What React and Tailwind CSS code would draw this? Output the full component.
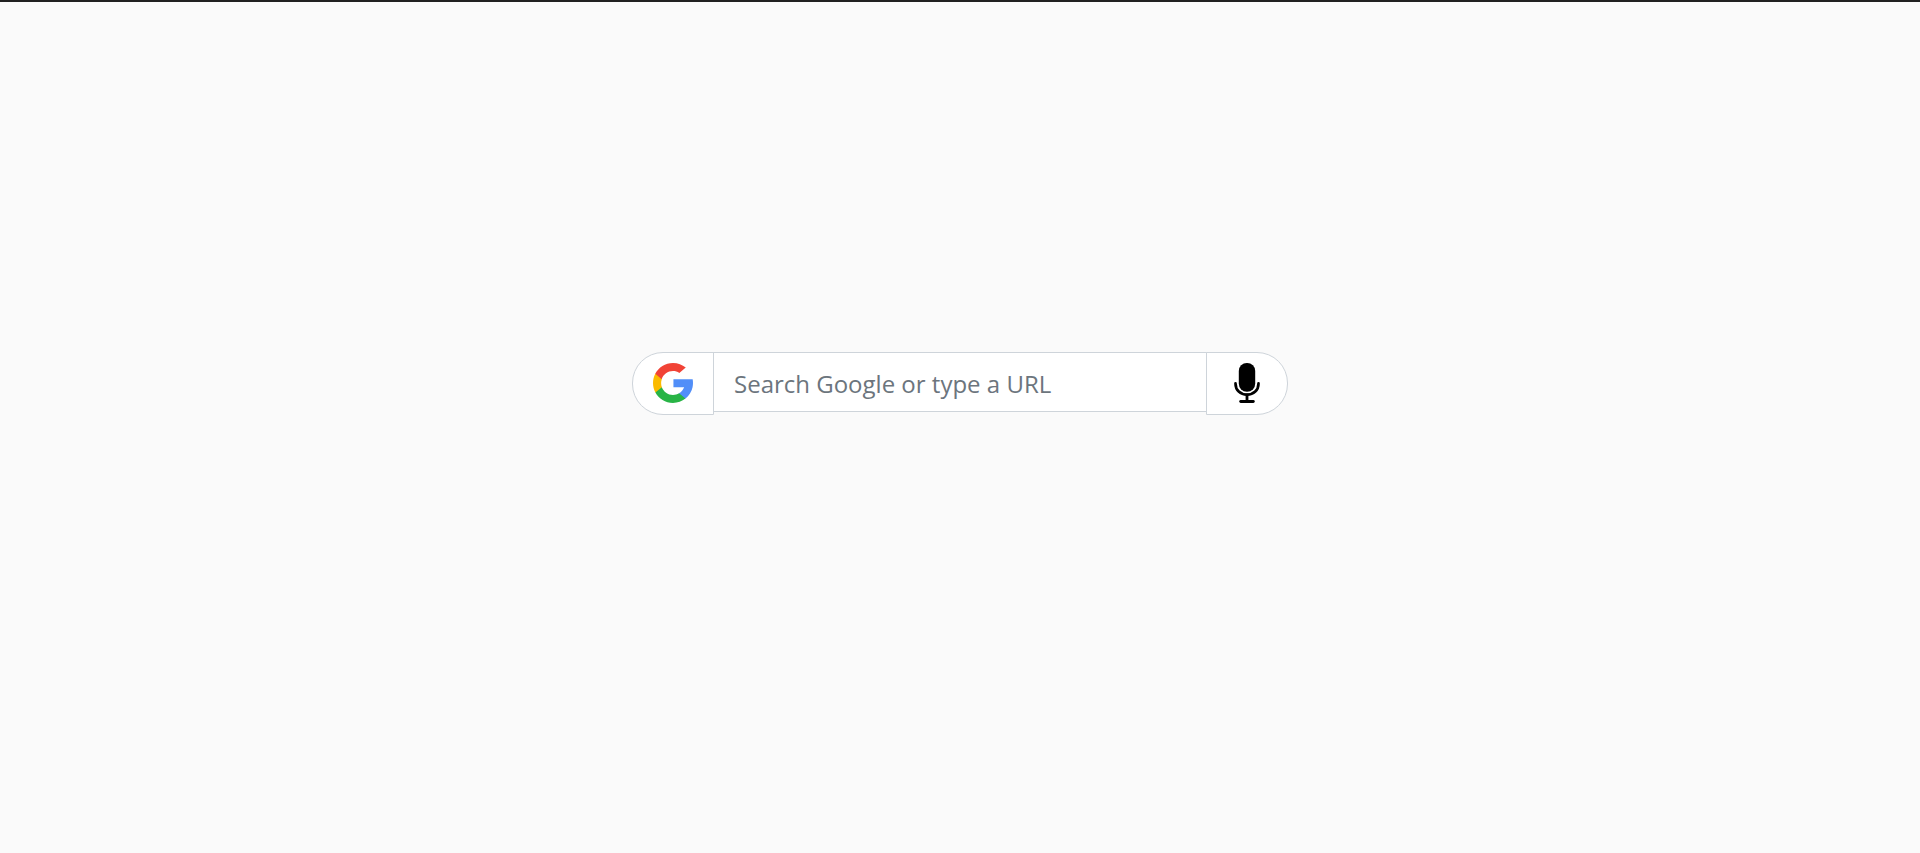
function GoogleLogo() {
  return (
    <svg viewBox="0 0 512 512" className="size-10" aria-hidden="true">
      <path fill="#FBBB00" d="M113.47,309.408L95.648,375.94l-65.139,1.378C11.042,341.211,0,299.9,0,256c0-42.451,10.324-82.483,28.624-117.732h0.014l57.992,10.632l25.404,57.644c-5.317,15.501-8.215,32.141-8.215,49.456C103.821,274.792,107.225,292.797,113.47,309.408z" />
      <path fill="#518EF8" d="M507.527,208.176C510.467,223.662,512,239.655,512,256c0,18.328-1.927,36.206-5.598,53.451c-12.462,58.683-45.025,109.925-90.134,146.187l-0.014-0.014l-73.044-3.727l-10.338-64.535c29.932-17.554,53.324-45.025,65.646-77.911h-136.89V208.176h138.887H507.527z" />
      <path fill="#28B446" d="M416.253,455.624l0.014,0.014C372.396,490.901,316.666,512,256,512c-97.491,0-182.252-54.491-225.491-134.681l82.961-67.91c21.619,57.698,77.278,98.771,142.53,98.771c28.047,0,54.323-7.582,76.87-20.818L416.253,455.624z" />
      <path fill="#F14336" d="M419.404,58.936l-82.933,67.896c-23.335-14.586-50.919-23.012-80.471-23.012c-66.729,0-123.429,42.957-143.965,102.724l-83.397-68.276h-0.014C71.23,56.123,157.06,0,256,0C318.115,0,375.068,22.126,419.404,58.936z" />
    </svg>
  );
}

function Microphone() {
  return (
    <svg viewBox="0 0 40 40" className="size-10" fill="none" stroke="#000" strokeLinecap="round" aria-hidden="true">
      <rect x="11.8" y="0" width="16.4" height="28.8" rx="8" fill="#000" stroke="none" />
      <path d="M8.5 20.4c0 6.8 4.8 11.2 11.5 11.2s11.5-4.4 11.5-11.2" strokeWidth="2.7" />
      <path d="M20 32v6" strokeWidth="2.8" />
      <path d="M13.7 38.5h12.6" strokeWidth="2.9" />
    </svg>
  );
}

export default function App() {
  return (
    <main className="flex min-h-screen items-start justify-center border-t-2 border-[#212121] bg-[#fafafa] pt-[350px] font-['Open_Sans','Noto_Sans',sans-serif]">
      <form role="search" className="flex w-full max-w-[656px] items-start" onSubmit={(e) => e.preventDefault()}>
        <label htmlFor="search" aria-label="Search" className="h-[63px] shrink-0 rounded-l-[31px] border border-[#ced4da] bg-white px-5 pt-2.5">
          <GoogleLogo />
        </label>
        <input
          id="search"
          type="text"
          placeholder="Search Google or type a URL"
          className="-ml-px h-[60px] min-w-0 flex-1 border border-[#ced4da] bg-white px-5 pt-0.5 text-2xl text-[#212529] outline-none placeholder:text-[#6c757d] placeholder:opacity-100"
        />
        <button type="button" aria-label="Search by voice" className="-ml-px flex h-[63px] shrink-0 items-start rounded-r-[31px] border border-[#ced4da] bg-white px-5 pt-2.5">
          <Microphone />
        </button>
      </form>
    </main>
  );
}
